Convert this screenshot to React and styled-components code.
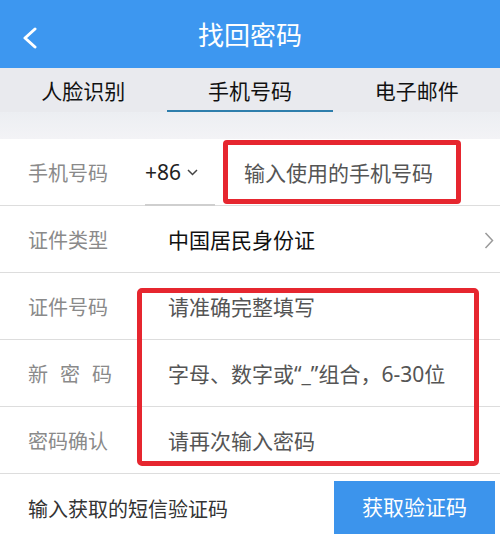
import React from "react";
import styled, { createGlobalStyle } from "styled-components";

const GlobalStyle = createGlobalStyle`
  html, body {
    margin: 0;
    padding: 0;
    background: #ffffff;
  }
  body {
    font-family: "Noto Sans CJK SC", "Noto Sans", sans-serif;
  }
`;

const Page = styled.div`
  width: 500px;
  height: 535px;
  overflow: hidden;
  background: #ffffff;
`;

const Header = styled.div`
  height: 68px;
  background: #3d97f0;
  display: flex;
  align-items: center;
  justify-content: center;
  position: relative;
`;

const BackButton = styled.div`
  position: absolute;
  left: 22px;
  top: 26px;
  width: 20px;
  height: 24px;
  display: flex;
  align-items: center;
`;

const Title = styled.h1`
  margin: 0;
  font-size: 26px;
  font-weight: 400;
  color: #ffffff;
  line-height: 1;
`;

const TabBar = styled.div`
  height: 44px;
  background: #e9eaee;
  display: grid;
  grid-template-columns: repeat(3, 1fr);
`;

const Tab = styled.div`
  display: flex;
  align-items: center;
  justify-content: center;
  font-size: 21px;
  color: #111;
  position: relative;

  &::after {
    content: "";
    display: ${(p) => (p.$active ? "block" : "none")};
    position: absolute;
    left: 0;
    right: 0;
    bottom: 0;
    height: 2px;
    background: #2e7eac;
  }
`;

const Spacer = styled.div`
  height: 27px;
  background: linear-gradient(#eceef2, #f3f3f6);
`;

const Row = styled.div`
  height: 67px;
  border-bottom: 1px solid #dddddd;
  display: flex;
  align-items: center;
  padding-left: 28px;
  box-sizing: border-box;
  position: relative;
`;

const Label = styled.div`
  width: ${(p) => p.$width || 140}px;
  flex-shrink: 0;
  font-size: 20px;
  color: #8a8a8a;
  letter-spacing: ${(p) => p.$spread || 0}px;
`;

const Value = styled.div`
  flex: 1;
  font-size: 21px;
  color: ${(p) => (p.$dark ? "#111" : "#555")};
`;

const Latin = styled.span`
  font-family: "Noto Sans", sans-serif;
`;

const CountryCode = styled.div`
  width: 70px;
  height: 100%;
  display: flex;
  align-items: center;
  gap: 6px;
  font-family: "Noto Sans", sans-serif;
  font-size: 21px;
  color: #222;
  box-sizing: border-box;
  border-bottom: 2px solid #cfcfcf;
  margin-bottom: -2px;
`;

const PhoneInput = styled.div`
  margin-left: 8px;
  width: 238px;
  height: 64px;
  box-sizing: border-box;
  border: 5px solid #e6262f;
  border-radius: 4px;
  display: flex;
  align-items: center;
  padding-left: 16px;
  font-size: 21px;
  color: #555;
`;

const Chevron = styled.div`
  position: absolute;
  right: 6px;
  top: 26px;
  display: flex;
`;

const Group = styled.div`
  position: relative;
`;

const Highlight = styled.div`
  position: absolute;
  left: 137px;
  top: 15px;
  width: 342px;
  height: 178px;
  box-sizing: border-box;
  border: 5px solid #e6262f;
  border-radius: 5px;
  pointer-events: none;
`;

const CodeRow = styled.div`
  display: flex;
  align-items: flex-end;
  justify-content: space-between;
  padding-left: 28px;
  padding-right: 5px;
  height: 60px;
`;

const CodeHint = styled.div`
  font-size: 20px;
  color: #333;
  align-self: center;
  margin-top: 8px;
`;

const SendButton = styled.button`
  width: 161px;
  height: 53px;
  border: none;
  border-radius: 0;
  background: #3c94ec;
  color: #ffffff;
  font-family: "Noto Sans CJK SC", sans-serif;
  font-size: 21px;
  padding: 0 0 4px;
`;

function App() {
  return (
    <Page>
      <GlobalStyle />
      <Header>
        <BackButton>
          <svg width="16" height="22" viewBox="0 0 16 22">
            <path d="M13 2 L3 11 L13 20" fill="none" stroke="#fff" strokeWidth="3" strokeLinecap="round" strokeLinejoin="round" />
          </svg>
        </BackButton>
        <Title>找回密码</Title>
      </Header>
      <TabBar>
        <Tab>人脸识别</Tab>
        <Tab $active>手机号码</Tab>
        <Tab>电子邮件</Tab>
      </TabBar>
      <Spacer />

      <Row>
        <Label $width={117}>手机号码</Label>
        <CountryCode>
          +86
          <svg width="11" height="7" viewBox="0 0 11 7">
            <path d="M1 1 L5.5 5.5 L10 1" fill="none" stroke="#444" strokeWidth="1.5" />
          </svg>
        </CountryCode>
        <PhoneInput>输入使用的手机号码</PhoneInput>
      </Row>

      <Row>
        <Label>证件类型</Label>
        <Value $dark>中国居民身份证</Value>
        <Chevron>
          <svg width="10" height="17" viewBox="0 0 10 17">
            <path d="M1.5 1 L8.5 8.5 L1.5 16" fill="none" stroke="#9a9a9a" strokeWidth="1.5" />
          </svg>
        </Chevron>
      </Row>

      <Group>
        <Row>
          <Label>证件号码</Label>
          <Value>请准确完整填写</Value>
        </Row>
        <Row>
          <Label $spread={12}>新密码</Label>
          <Value>
            字母、数字或<Latin>“_”</Latin>组合，<Latin>6-30</Latin>位
          </Value>
        </Row>
        <Row>
          <Label>密码确认</Label>
          <Value>请再次输入密码</Value>
        </Row>
        <Highlight />
      </Group>

      <CodeRow>
        <CodeHint>输入获取的短信验证码</CodeHint>
        <SendButton>获取验证码</SendButton>
      </CodeRow>
    </Page>
  );
}

export default App;
